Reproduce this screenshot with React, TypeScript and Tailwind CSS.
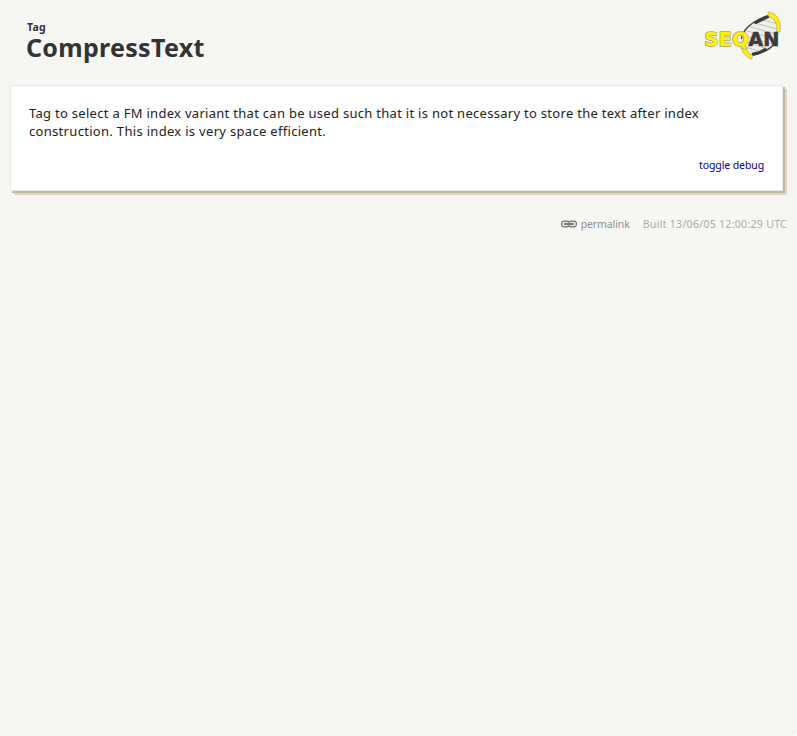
function Logo() {
  return (
    <svg width="95" height="60" viewBox="0 0 285 180" className="block shrink-0" role="img" aria-label="SeqAn">
      <defs>
        <clipPath id="lens">
          <path d="M133 104 C134 76 160 45 214 32 C242 45 250 72 240 100 C232 126 196 146 162 148 C142 140 133 122 133 104Z" />
        </clipPath>
      </defs>
      <path d="M133 104 C134 76 160 45 214 32 C242 45 250 72 240 100 C232 126 196 146 162 148 C142 140 133 122 133 104Z" fill="#f0f0ed" />
      <g clipPath="url(#lens)" stroke="#b4b4b0" strokeWidth="2.5">
        <path d="M180 41L250 59M166 52L250 75M155 64L250 91M140 75L250 107M135 91L250 124M130 106L220 134M130 121L205 145" />
      </g>
      <path d="M133 102C136 76 163 49 210 33" fill="none" stroke="#3f3b3d" strokeWidth="4" />
      <path d="M170 53C184 42 199 35 215 29L217 38C202 45 190 51 176 58Z" fill="#3f3b3d" />
      <path d="M240 103C232 126 202 144 164 151" fill="none" stroke="#3f3b3d" strokeWidth="4" />
      <path d="M163 153L165 143C181 141 191 137 204 128L211 135C195 145 181 151 163 153Z" fill="#3f3b3d" />
      <path d="M214 20C240 25 254 47 249 81L238 81C244 57 234 42 213 32Z" fill="#fff200" stroke="#aaa460" strokeWidth="2" />
      <path d="M130 112C131 134 141 153 164 163L167 151C151 144 144 130 143 114Z" fill="#fff200" stroke="#aaa460" strokeWidth="2" />
      <text x="22" y="123" textLength="133" lengthAdjust="spacingAndGlyphs" fontFamily="DejaVu Sans, sans-serif" fontSize="60" fontWeight="700" fill="#fff200" stroke="#a9a474" strokeWidth="4.5" paintOrder="stroke">SEQ</text>
      <text x="154" y="123" textLength="93" lengthAdjust="spacingAndGlyphs" fontFamily="DejaVu Sans, sans-serif" fontSize="60" fontWeight="700" fill="#3f3b3d" stroke="#3f3b3d" strokeWidth="2">AN</text>
    </svg>
  );
}

function LinkIcon() {
  return (
    <svg width="16" height="8" viewBox="0 0 16 8" className="block" fill="none" aria-hidden="true">
      <rect x="0.6" y="1.2" width="7.8" height="5.6" rx="2.6" stroke="#707070" strokeWidth="1.2" />
      <rect x="7.6" y="1.2" width="7.8" height="5.6" rx="2.6" stroke="#707070" strokeWidth="1.2" />
      <path d="M4 4H12" stroke="#d4d4d0" strokeWidth="3" />
      <path d="M3.5 4H12.5" stroke="#555" strokeWidth="1.3" strokeLinecap="round" />
    </svg>
  );
}

export default function App() {
  return (
    <div className="h-[736px] w-[797px] bg-white font-['Noto_Sans',sans-serif]">
      <div className="flex h-full flex-col rounded-b-[4px] bg-[#f6f7f2]">
        <header className="flex h-[85px] items-start justify-between pt-[5px] pr-[5px] pl-[26px] text-[#333]">
          <div className="pt-[14px] font-bold whitespace-nowrap">
            <div className="h-[15px] pl-px text-[10.5px] leading-4 tracking-[0.25px]">Tag</div>
            <h1 className="text-[25px] leading-[27px] tracking-[0.3px]">CompressText</h1>
          </div>
          <Logo />
        </header>
        <main className="ml-[10px] h-[106px] w-[773px] border border-[#e9eae5] bg-white pt-[18px] pr-[18px] pl-[18px] shadow-[2px_2px_0_#c2b8a3,4px_4px_0_#ded6c6]">
          <p className="text-[13px] leading-[18px] tracking-[0.29px] whitespace-nowrap text-[#222]">
            <span className="block">Tag to select a FM index variant that can be used such that it is not necessary to store the text after index</span>
            <span className="block tracking-[0.31px]">construction. This index is very space efficient.</span>
          </p>
          <div className="mt-[17px] flex justify-end text-[10.5px] leading-4 tracking-[-0.1px] text-[#00008b]">
            <a>toggle debug</a>
          </div>
        </main>
        <footer className="mt-[25px] flex items-center justify-end pr-[10px] text-[10.5px] leading-4 whitespace-nowrap">
          <LinkIcon />
          <a className="ml-1 tracking-[-0.1px] text-[#909090]">permalink</a>
          <span className="ml-[13px] tracking-[0.3px] text-[#aaa]">Built 13/06/05 12:00:29 UTC</span>
        </footer>
      </div>
    </div>
  );
}
